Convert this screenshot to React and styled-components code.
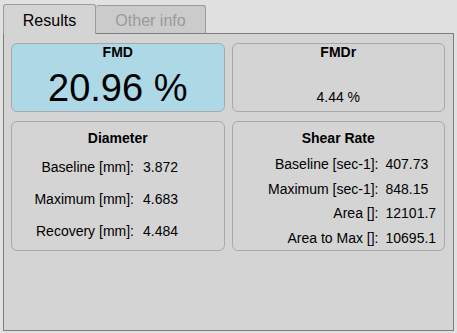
import React from 'react';
import styled, { createGlobalStyle } from 'styled-components';

const GlobalStyle = createGlobalStyle`
  body {
    margin: 0;
    background: #e1e1e1;
    font-family: "Liberation Sans", Arial, sans-serif;
  }
`

const diameter = [
  ['Baseline [mm]:', '3.872'],
  ['Maximum [mm]:', '4.683'],
  ['Recovery [mm]:', '4.484'],
]

const shear = [
  ['Baseline [sec-1]:', '407.73'],
  ['Maximum [sec-1]:', '848.15'],
  ['Area []:', '12101.7'],
  ['Area to Max []:', '10695.1'],
]

const App = () => {
  return (
    <Page>
      <GlobalStyle />
      <TabBar>
        <Tab $active>Results</Tab>
        <Tab>Other info</Tab>
      </TabBar>
      <Panel>
        <Card $bg="#add8e6">
          <Title>FMD</Title>
          <BigValue>20.96 %</BigValue>
        </Card>
        <Card>
          <Title>FMDr</Title>
          <SmallValue>4.44 %</SmallValue>
        </Card>
        <Card $top={8}>
          <Title>Diameter</Title>
          <StatGrid $labelWidth={122} $gap={9} $rowGap={16} $top={13}>
            {diameter.map(([label, value]) => (
              <React.Fragment key={label}>
                <Label>{label}</Label>
                <Value>{value}</Value>
              </React.Fragment>
            ))}
          </StatGrid>
        </Card>
        <Card $top={8}>
          <Title>Shear Rate</Title>
          <StatGrid $labelWidth={146} $gap={7} $rowGap={8.7} $top={10}>
            {shear.map(([label, value]) => (
              <React.Fragment key={label}>
                <Label>{label}</Label>
                <Value>{value}</Value>
              </React.Fragment>
            ))}
          </StatGrid>
        </Card>
      </Panel>
    </Page>
  )
}
export default App

const Page = styled.div`
  width: 457px;
  height: 333px;
  padding: 4px 0 0 3px;
  box-sizing: border-box;
`

const TabBar = styled.div`
  display: flex;
  align-items: flex-end;
  height: 29px;
`

const Tab = styled.div`
  box-sizing: border-box;
  position: relative;
  z-index: 1;
  width: ${p => p.$active ? '93px' : '110px'};
  height: ${p => p.$active ? '30px' : '28px'};
  margin-bottom: ${p => p.$active ? '-1px' : '0'};
  padding-top: ${p => p.$active ? '7px' : '6px'};
  border: 1px solid #9c9c9c;
  border-bottom: none;
  border-left: ${p => p.$active ? '1px solid #9c9c9c' : 'none'};
  border-radius: 3px 3px 0 0;
  background: ${p => p.$active ? '#d4d4d4' : '#cbcbcb'};
  color: ${p => p.$active ? '#000' : '#9a9a9a'};
  font-size: 16px;
  line-height: 18px;
  text-align: center;
`

const Panel = styled.div`
  box-sizing: border-box;
  width: 451px;
  height: 298px;
  border: 1px solid #7d7d7d;
  background: #d4d4d4;
  padding: 9px 8px 0 7px;
  display: grid;
  grid-template-columns: 1fr 1fr;
  grid-template-rows: 69px 130px;
  column-gap: 7px;
  row-gap: 9px;
  align-content: start;
`

const Card = styled.div`
  box-sizing: border-box;
  border: 1px solid #a9a9a9;
  border-radius: 6px;
  background: ${p => p.$bg || '#d4d4d4'};
  padding-top: ${p => p.$top || 0}px;
  display: flex;
  flex-direction: column;
  align-items: center;
`

const Title = styled.div`
  font-size: 14px;
  font-weight: bold;
  line-height: 16px;
  color: #000;
`

const BigValue = styled.div`
  margin-top: 9px;
  font-size: 38px;
  line-height: 38px;
  color: #000;
`

const SmallValue = styled.div`
  margin-top: 29px;
  font-size: 14px;
  line-height: 16px;
  color: #000;
`

const StatGrid = styled.div`
  align-self: stretch;
  display: grid;
  grid-template-columns: ${p => p.$labelWidth}px auto;
  column-gap: ${p => p.$gap}px;
  row-gap: ${p => p.$rowGap}px;
  margin-top: ${p => p.$top}px;
  font-size: 14px;
  line-height: 16px;
  color: #000;
`

const Label = styled.div`
  text-align: right;
  white-space: nowrap;
`

const Value = styled.div`
  text-align: left;
`
